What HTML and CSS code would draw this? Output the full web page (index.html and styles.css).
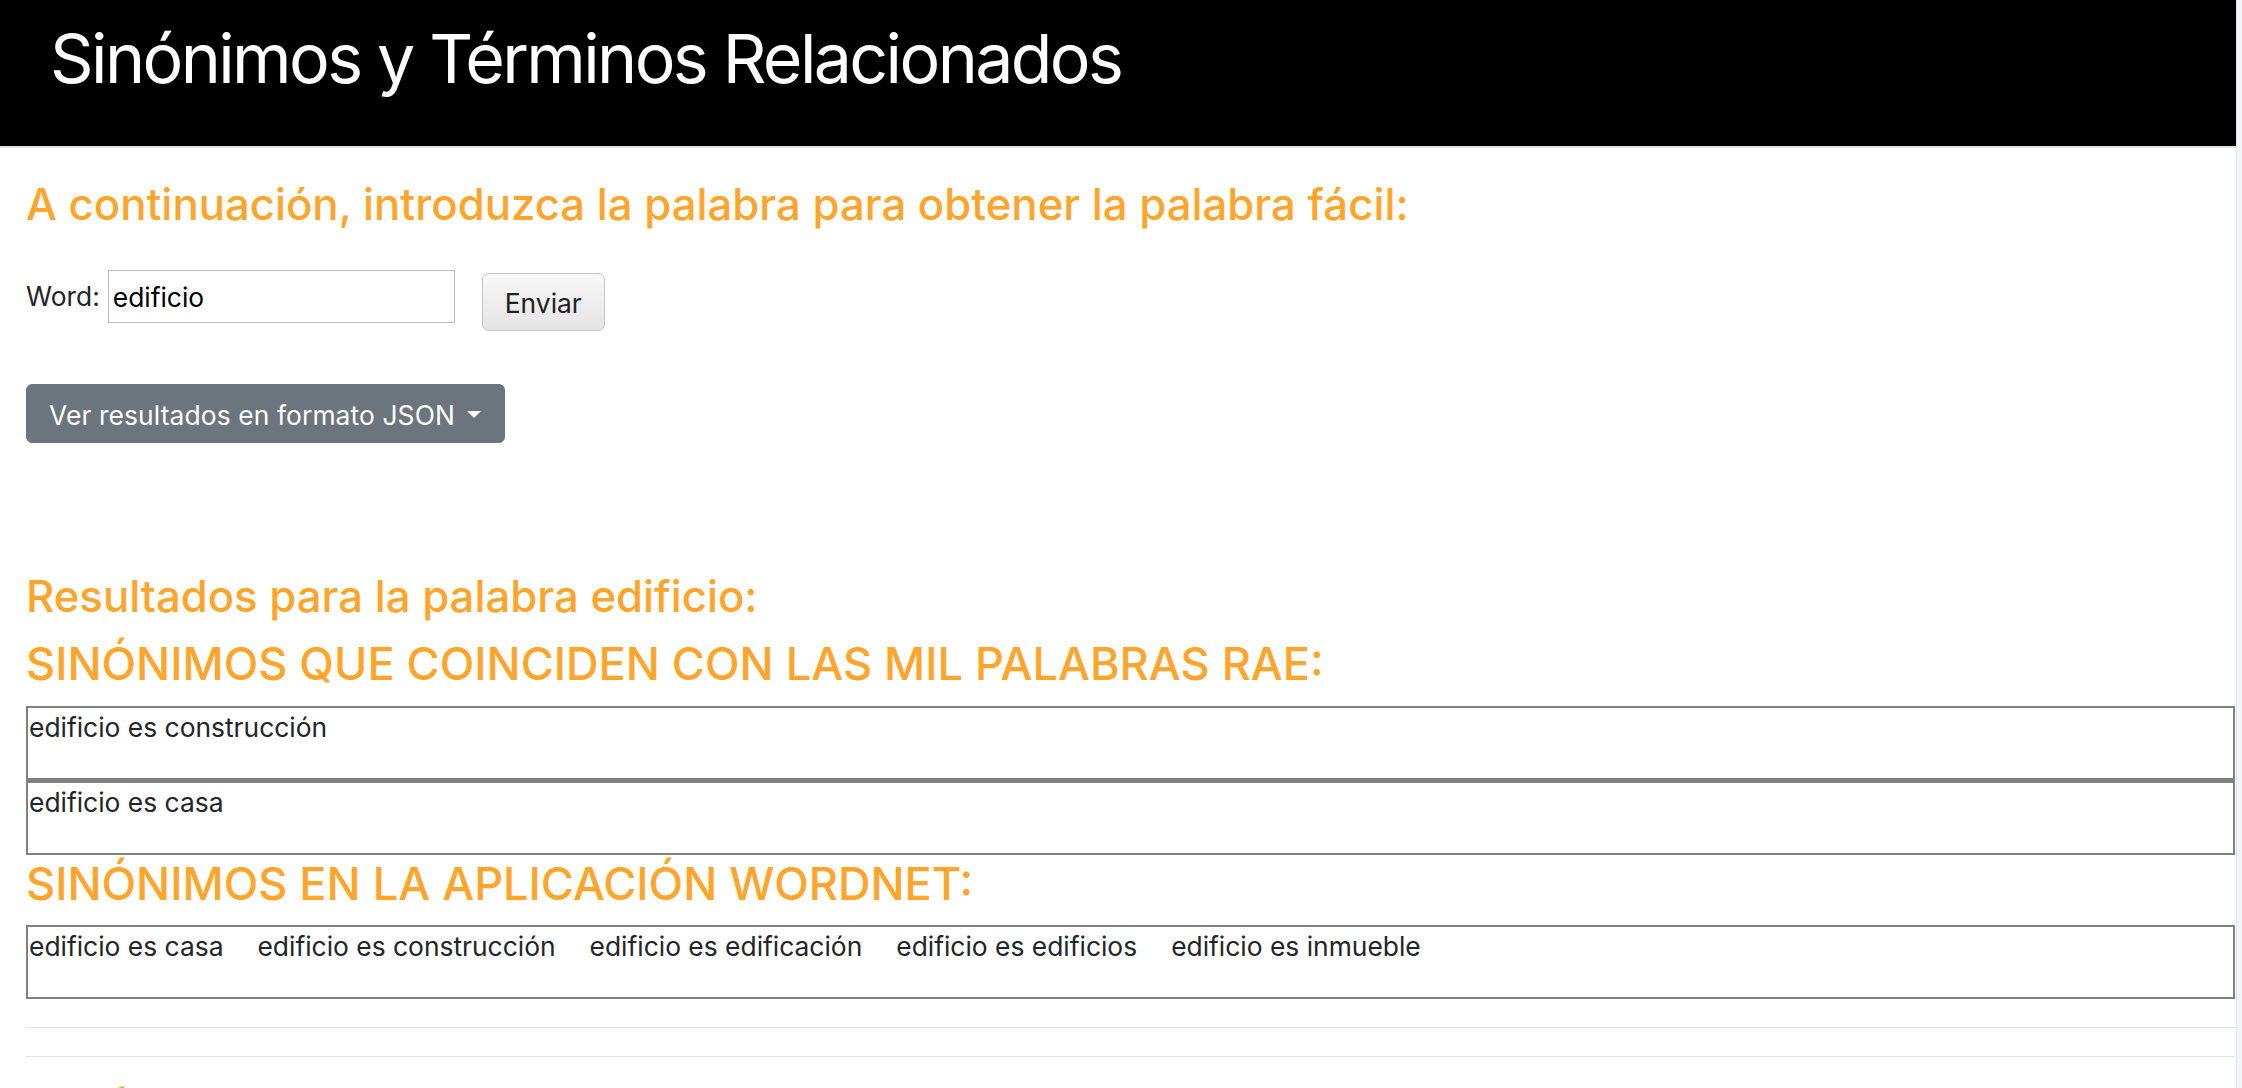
FILE: index.html
```html
<!DOCTYPE html>
<html lang="es">
<head>
<meta charset="utf-8">
<title>Sinónimos y Términos Relacionados</title>
<link rel="stylesheet" href="styles.css">
</head>
<body>
<div class="layout">
  <div class="page">
    <header class="topbar">
      <h1 class="title">Sinónimos y Términos Relacionados</h1>
    </header>
    <main class="content">
      <h3 class="heading heading-intro">A continuación, introduzca la palabra para obtener la palabra fácil:</h3>
      <form class="word-form">
        <label class="word-label" for="word">Word:</label>
        <input class="word-input" id="word" type="text" value="edificio">
        <button class="submit-btn" type="button">Enviar</button>
      </form>
      <div class="dropdown">
        <button class="json-btn" type="button">Ver resultados en formato JSON <span class="caret"></span></button>
      </div>
      <h4 class="heading heading-results">Resultados para la palabra edificio:</h4>
      <h3 class="heading heading-section">SINÓNIMOS QUE COINCIDEN CON LAS MIL PALABRAS RAE:</h3>
      <div class="result-box"><p class="result-line">edificio es construcción</p></div>
      <div class="result-box"><p class="result-line">edificio es casa</p></div>
      <h3 class="heading heading-section heading-wordnet">SINÓNIMOS EN LA APLICACIÓN WORDNET:</h3>
      <div class="result-box result-box-single">
        <p class="result-line result-inline">
          <span class="syn">edificio es casa</span>
          <span class="syn">edificio es construcción</span>
          <span class="syn">edificio es edificación</span>
          <span class="syn">edificio es edificios</span>
          <span class="syn">edificio es inmueble</span>
        </p>
      </div>
      <hr class="divider divider-first">
      <hr class="divider">
      <h3 class="heading heading-section heading-next">SINÓNIMOS EN OTRAS FUENTES:</h3>
    </main>
  </div>
  <div class="scroll-track"></div>
</div>
</body>
</html>
```

FILE: styles.css
```css
html, body {
  margin: 0;
  padding: 0;
  overflow: hidden;
  background: #ffffff;
}

body {
  font-family: "Inter", "Liberation Sans", Arial, sans-serif;
  font-size: 26.4px;
  line-height: 1.5;
  color: #212529;
}

.layout {
  display: flex;
  width: 2242px;
  min-height: 1088px;
}

.page {
  width: 2236px;
  flex: none;
}

.scroll-track {
  flex: 1;
  background: #f4f5f6;
  border-left: 1px solid #dfe3e6;
}

.topbar {
  box-sizing: border-box;
  height: 148px;
  background: #000000;
  border-bottom: 2px solid #dee2e6;
  padding: 24px 0 0 50px;
}

.title {
  margin: 0;
  font-family: "Inter", "Liberation Sans", Arial, sans-serif;
  font-weight: 400;
  font-size: 68px;
  line-height: 1;
  letter-spacing: -2.6px;
  color: #ffffff;
}

.content {
  display: flex;
  flex-direction: column;
  align-items: flex-start;
  padding: 0 1px 0 26px;
}

.heading {
  margin: 0;
  font-weight: 500;
  color: #ffa52c;
}

.heading-intro {
  margin-top: 30px;
  font-size: 43.7px;
  line-height: 54px;
}

.word-form {
  display: flex;
  align-items: flex-start;
  margin: 38px 0 0 0;
}

.word-label {
  font-size: 26.4px;
  line-height: 53px;
  color: #212529;
}

.word-input {
  box-sizing: border-box;
  width: 347px;
  height: 53px;
  margin: 0 0 0 8px;
  padding: 0 4px;
  border: 1px solid #bcbcbc;
  border-radius: 0;
  font-family: inherit;
  font-size: 26.4px;
  color: #000000;
  background: #ffffff;
  outline: none;
}

.submit-btn {
  box-sizing: border-box;
  height: 58px;
  margin: 3px 0 0 27px;
  padding: 2px 22px 0 22px;
  border: 1.5px solid #c5c5c5;
  border-radius: 7px;
  background: linear-gradient(#f8f8f8, #e4e4e4);
  font-family: inherit;
  font-size: 26.4px;
  color: #222222;
}

.dropdown {
  margin-top: 53px;
}

.json-btn {
  box-sizing: border-box;
  height: 59px;
  padding: 11px 23px 7px 22px;
  border: 1px solid #6c757d;
  border-radius: 6px;
  background: #6c757d;
  font-family: inherit;
  font-size: 26.4px;
  line-height: 39px;
  letter-spacing: 0.1px;
  color: #ffffff;
}

.caret {
  display: inline-block;
  margin-left: 5px;
  vertical-align: 6.7px;
  border-top: 7.9px solid #ffffff;
  border-left: 7.9px solid transparent;
  border-right: 7.9px solid transparent;
}

.heading-results {
  margin-top: 128px;
  font-size: 43.7px;
  line-height: 52px;
}

.heading-section {
  margin-top: 14px;
  margin-bottom: 14.7px;
  font-size: 45.1px;
  line-height: 54px;
}

.heading-wordnet {
  margin-top: 2.6px;
  margin-bottom: 13.7px;
}

.heading-next {
  margin-top: 29px;
}

.result-box {
  align-self: stretch;
  box-sizing: border-box;
  height: 74px;
  border: 2px solid #808080;
  padding: 0 0 0 1px;
}

.result-box + .result-box {
  height: 75px;
  border-top-width: 3px;
}

.result-line {
  margin: 0;
  line-height: 39.6px;
}

.result-inline {
  display: flex;
  gap: 34px;
}

.divider {
  align-self: stretch;
  height: 0;
  margin: 28.4px 0 0 0;
  border: 0;
  border-top: 1.3px solid #e4e4e4;
}

.divider + .divider {
  margin-top: 27.4px;
}
```
